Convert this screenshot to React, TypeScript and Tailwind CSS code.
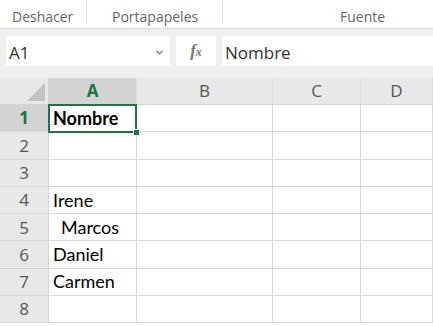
import { ChevronDown } from 'lucide-react';

const cols = [
    { id: 'A', w: 'w-[88px]' },
    { id: 'B', w: 'w-[136px]' },
    { id: 'C', w: 'w-[88px]' },
    { id: 'D', w: 'flex-1' },
];

const rows: { n: number; a: string; bold?: boolean; indent?: boolean }[] = [
    { n: 1, a: 'Nombre', bold: true },
    { n: 2, a: '' },
    { n: 3, a: '' },
    { n: 4, a: 'Irene' },
    { n: 5, a: 'Marcos', indent: true },
    { n: 6, a: 'Daniel' },
    { n: 7, a: 'Carmen' },
    { n: 8, a: '' },
];

const ui = { fontFamily: '"Open Sans", "Noto Sans", sans-serif' };
const cell = { fontFamily: 'Lato, "Liberation Sans", sans-serif' };

export default function App() {
    return (
        <div className="w-[433px] h-[326px] overflow-hidden bg-white" style={ui}>
            {/* Ribbon group labels */}
            <div className="h-[29px] flex border-b border-[#dadada] text-[14px] text-[#666]">
                <div className="w-[87px] pl-3 pt-[6px] border-r border-[#e6e6e6] h-[23px]">Deshacer</div>
                <div className="w-[136px] pl-[25px] pt-[6px] border-r border-[#e6e6e6] h-[23px]">Portapapeles</div>
                <div className="flex-1 pl-[117px] pt-[6px]">Fuente</div>
            </div>

            {/* Formula bar */}
            <div className="h-[49px] bg-[#efefef] pt-[7px] pl-[6px] flex gap-[6px]">
                <div className="w-[164px] h-[30px] bg-white flex items-center pl-[3px] pr-[5px] pt-[3px] text-[17px] text-[#333]">
                    <span className="flex-1">A1</span>
                    <ChevronDown size={11} strokeWidth={2.5} className="text-[#666]" />
                </div>
                <div className="w-[40px] h-[30px] bg-white flex items-center justify-center">
                    <span className="text-[17px] italic font-bold text-[#777]" style={{ fontFamily: '"Liberation Serif", serif' }}>
                        f<span className="text-[12px]">x</span>
                    </span>
                </div>
                <div className="flex-1 h-[30px] bg-white flex items-center pl-[3px] pt-[4px] text-[17px] text-[#333]">Nombre</div>
            </div>

            {/* Sheet */}
            <div className="relative">
                {/* Column headers */}
                <div className="flex h-[27px] bg-[#e8e8e8] border-b border-[#d4d4d4]">
                    <div className="w-[49px] relative border-r border-[#d4d4d4]">
                        <div className="absolute right-[3px] bottom-[3px] w-0 h-0 border-l-[18px] border-l-transparent border-b-[18px] border-b-[#c3c3c3]" />
                    </div>
                    {cols.map((c) => (
                        <div
                            key={c.id}
                            className={`${c.w} flex items-center justify-center border-r border-[#dcdcdc] text-[17px] ${c.id === 'A' ? 'bg-[#d3d3d3] text-[#217346] font-bold' : 'text-[#555]'}`}
                        >
                            {c.id}
                        </div>
                    ))}
                </div>

                {rows.map((r) => (
                    <div key={r.n} className="flex h-[27.3px] border-b border-[#d9d9d9]">
                        <div
                            className={`w-[49px] shrink-0 flex items-center justify-center border-r border-[#d4d4d4] text-[17px] ${r.n === 1 ? 'bg-[#d3d3d3] text-[#217346] font-bold' : 'bg-[#e8e8e8] text-[#555]'}`}
                        >
                            {r.n}
                        </div>
                        {cols.map((c) => (
                            <div
                                key={c.id}
                                className={`${c.w} flex items-center border-r border-[#d9d9d9] text-[18px] text-black ${r.indent && c.id === 'A' ? 'pl-[12px]' : 'pl-[4px]'} ${r.bold && c.id === 'A' ? 'font-bold' : ''}`}
                                style={cell}
                            >
                                {c.id === 'A' ? r.a : ''}
                            </div>
                        ))}
                    </div>
                ))}

                {/* Active cell selection */}
                <div className="absolute left-[48px] top-[26px] w-[89px] h-[29px] border-2 border-[#217346] pointer-events-none">
                    <div className="absolute right-[-5px] bottom-[-5px] w-[7px] h-[7px] bg-[#217346] border border-white" />
                </div>
            </div>
        </div>
    );
}
